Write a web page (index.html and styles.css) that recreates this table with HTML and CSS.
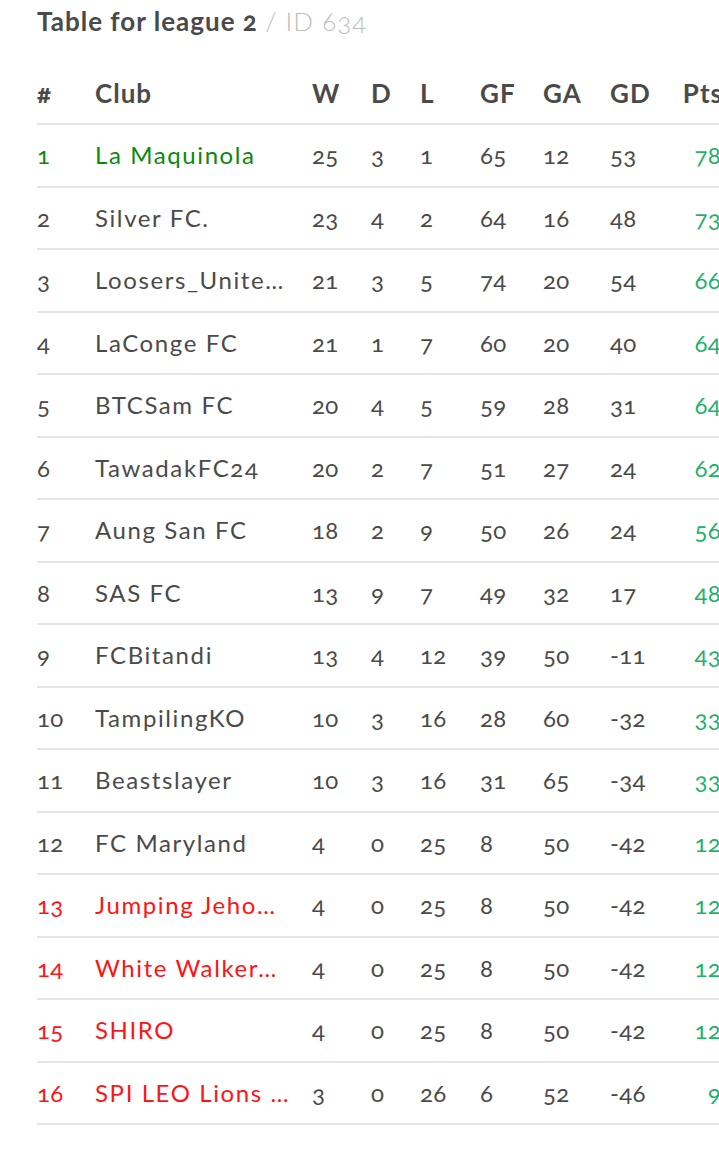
FILE: index.html
```html
<!DOCTYPE html>
<html lang="en">
<head>
<meta charset="utf-8">
<title>Table for league 2</title>
<link rel="stylesheet" href="styles.css">
</head>
<body>
<div class="page">
  <h2 class="title">Table for league 2 <span class="id">/ ID 634</span></h2>
  <table class="league">
    <colgroup>
      <col class="c-pos"><col class="c-club"><col class="c-w"><col class="c-d"><col class="c-l"><col class="c-gf"><col class="c-ga"><col class="c-gd"><col class="c-pts">
    </colgroup>
    <thead>
      <tr><th>#</th><th>Club</th><th>W</th><th>D</th><th>L</th><th>GF</th><th>GA</th><th>GD</th><th class="pts">Pts</th></tr>
    </thead>
    <tbody>
      <tr class="top"><td>1</td><td class="club">La Maquinola</td><td>25</td><td>3</td><td>1</td><td>65</td><td>12</td><td>53</td><td class="pts">78</td></tr>
      <tr><td>2</td><td class="club">Silver FC.</td><td>23</td><td>4</td><td>2</td><td>64</td><td>16</td><td>48</td><td class="pts">73</td></tr>
      <tr><td>3</td><td class="club">Loosers_Unite…</td><td>21</td><td>3</td><td>5</td><td>74</td><td>20</td><td>54</td><td class="pts">66</td></tr>
      <tr><td>4</td><td class="club">LaConge FC</td><td>21</td><td>1</td><td>7</td><td>60</td><td>20</td><td>40</td><td class="pts">64</td></tr>
      <tr><td>5</td><td class="club">BTCSam FC</td><td>20</td><td>4</td><td>5</td><td>59</td><td>28</td><td>31</td><td class="pts">64</td></tr>
      <tr><td>6</td><td class="club">TawadakFC24</td><td>20</td><td>2</td><td>7</td><td>51</td><td>27</td><td>24</td><td class="pts">62</td></tr>
      <tr><td>7</td><td class="club">Aung San FC</td><td>18</td><td>2</td><td>9</td><td>50</td><td>26</td><td>24</td><td class="pts">56</td></tr>
      <tr><td>8</td><td class="club">SAS FC</td><td>13</td><td>9</td><td>7</td><td>49</td><td>32</td><td>17</td><td class="pts">48</td></tr>
      <tr><td>9</td><td class="club">FCBitandi</td><td>13</td><td>4</td><td>12</td><td>39</td><td>50</td><td>-11</td><td class="pts">43</td></tr>
      <tr><td>10</td><td class="club">TampilingKO</td><td>10</td><td>3</td><td>16</td><td>28</td><td>60</td><td>-32</td><td class="pts">33</td></tr>
      <tr><td>11</td><td class="club">Beastslayer</td><td>10</td><td>3</td><td>16</td><td>31</td><td>65</td><td>-34</td><td class="pts">33</td></tr>
      <tr><td>12</td><td class="club">FC Maryland</td><td>4</td><td>0</td><td>25</td><td>8</td><td>50</td><td>-42</td><td class="pts">12</td></tr>
      <tr class="rel"><td>13</td><td class="club">Jumping Jeho…</td><td>4</td><td>0</td><td>25</td><td>8</td><td>50</td><td>-42</td><td class="pts">12</td></tr>
      <tr class="rel"><td>14</td><td class="club">White Walker…</td><td>4</td><td>0</td><td>25</td><td>8</td><td>50</td><td>-42</td><td class="pts">12</td></tr>
      <tr class="rel"><td>15</td><td class="club">SHIRO</td><td>4</td><td>0</td><td>25</td><td>8</td><td>50</td><td>-42</td><td class="pts">12</td></tr>
      <tr class="rel"><td>16</td><td class="club">SPI LEO Lions …</td><td>3</td><td>0</td><td>26</td><td>6</td><td>52</td><td>-46</td><td class="pts">9</td></tr>
    </tbody>
  </table>
</div>
</body>
</html>
```
FILE: styles.css
```css
html { overflow-x: hidden; }
body {
  margin: 0;
  background: #fff;
  color: #444;
  font-family: Lato, "Open Sans", sans-serif;
  font-variant-numeric: oldstyle-nums;
}
.page {
  padding-left: 37px;
  width: 700px;
}
.title {
  margin: 3px 0 0;
  height: 59.5px;
  font-size: 26px;
  line-height: 36px;
  font-weight: 700;
  letter-spacing: 1px;
  color: #4a4a4a;
}
.title .id {
  font-weight: 300;
  color: #bdbdbd;
  letter-spacing: 1px;
}
.league {
  border-collapse: separate;
  border-spacing: 0;
  table-layout: fixed;
  width: 700px;
  font-size: 24px;
}
.c-pos { width: 42px; }
.c-club { width: 217px; }
.c-w { width: 59px; }
.c-d { width: 49px; }
.c-l { width: 60px; }
.c-gf { width: 63px; }
.c-ga { width: 67px; }
.c-gd { width: 72px; }
.c-pts { width: 71px; }
.league th, .league td {
  height: 60.5px;
  padding: 0 0 0 16px;
  border-bottom: 2px solid #e5e5e5;
  text-align: left;
  vertical-align: middle;
  white-space: nowrap;
  overflow: hidden;
  line-height: 36px;
  box-sizing: content-box;
}
.league th:first-child, .league td:first-child { padding-left: 0; }
.league th {
  font-size: 26px;
  font-weight: 700;
  letter-spacing: 1px;
  color: #4a4a4a;
}
.league td {
  font-weight: 400;
  color: #4a4a4a;
  letter-spacing: 0.3px;
}
.league td.club { letter-spacing: 1.6px; }
.league .pts {
  text-align: right;
  padding-right: 16px;
}
.league th.pts { padding-right: 14px; }
.league td.pts { color: #1cb36c; letter-spacing: 0.3px; }
.league tr.top td:nth-child(1), .league tr.top td:nth-child(2) { color: #0a8a0a; }
.league tr.rel td:nth-child(1), .league tr.rel td:nth-child(2) { color: #ff1414; }
```
